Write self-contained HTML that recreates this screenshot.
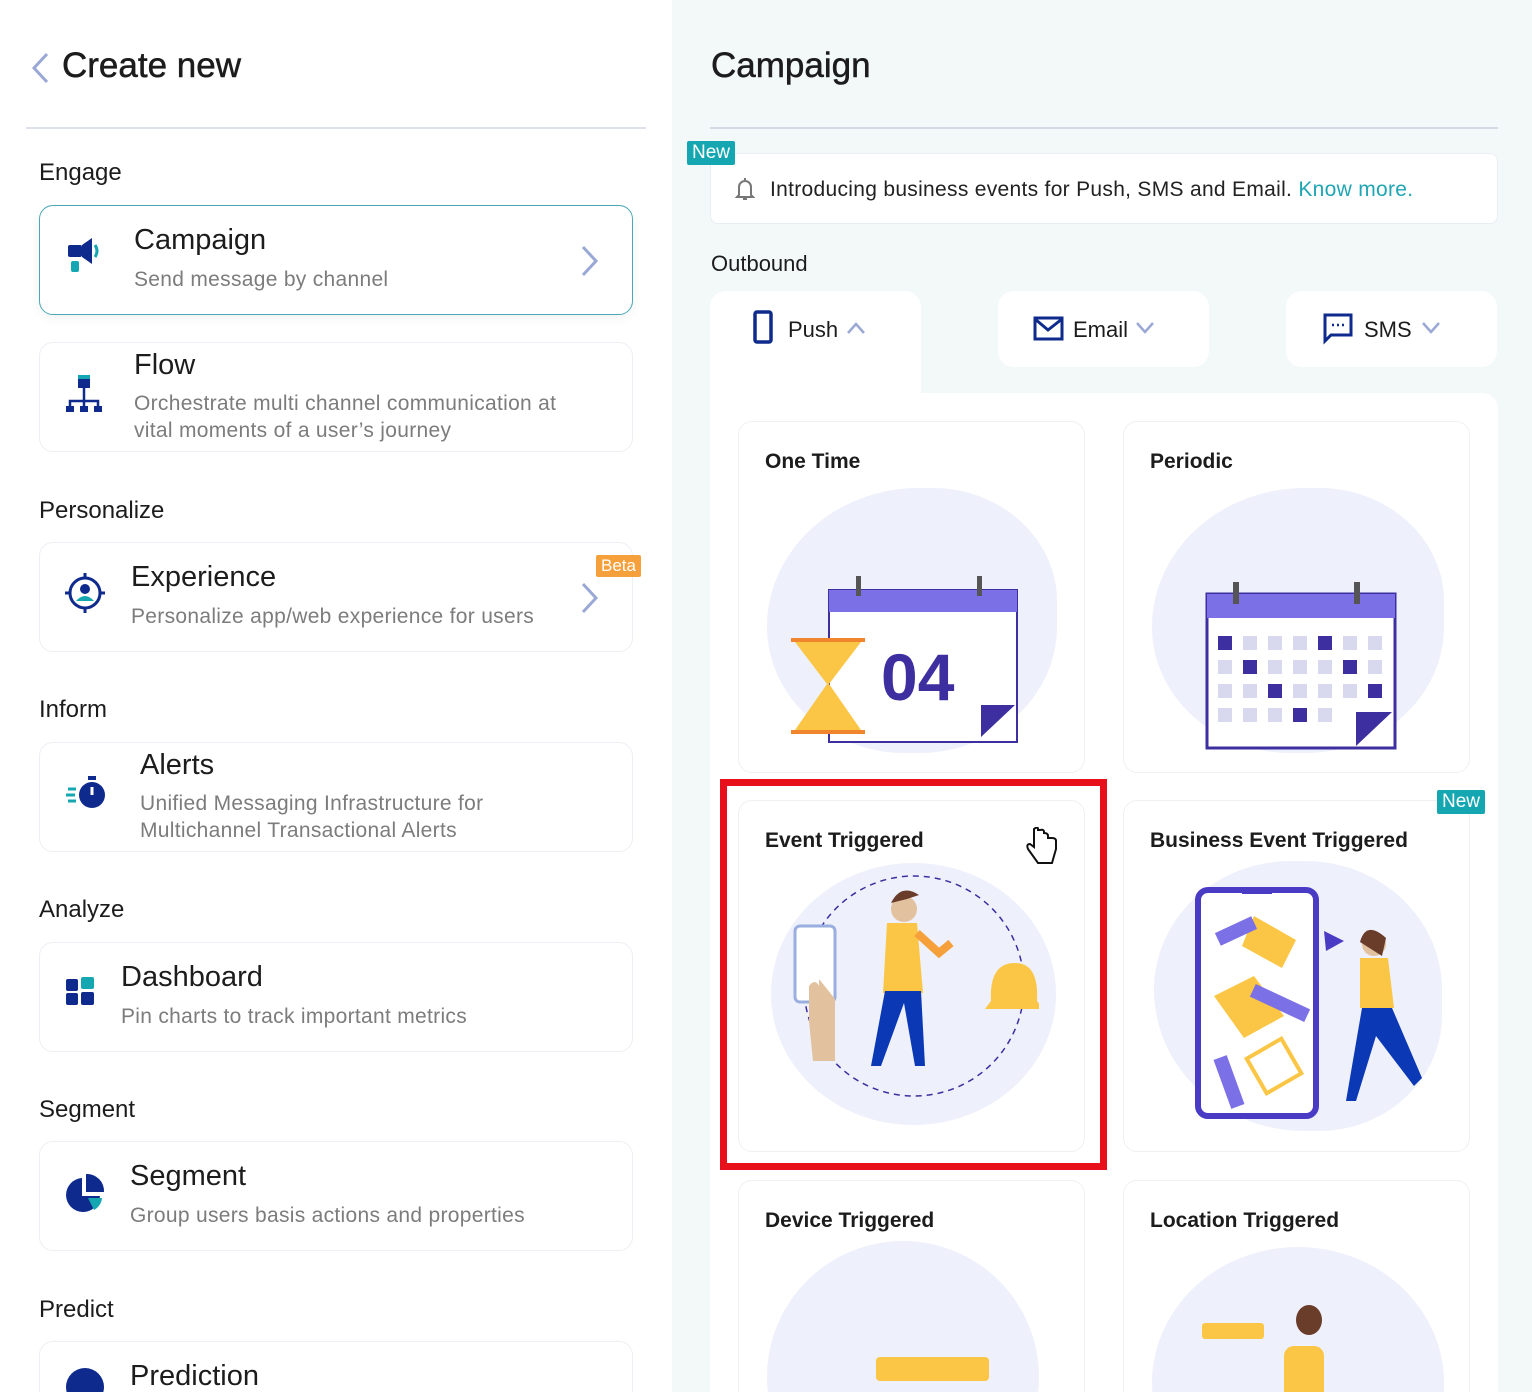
<!DOCTYPE html>
<html style="width:1532px;height:1392px;overflow:hidden"><head><meta charset="utf-8"><style>
*{margin:0;padding:0;box-sizing:border-box}
html,body{width:1532px;height:1392px;overflow:hidden}
body{font-family:"Liberation Sans",sans-serif;background:#fff;position:relative;color:#1c1c1c}
#wrap{position:absolute;left:0;top:0;width:1532px;height:1392px;overflow:hidden}
.a{position:absolute}
.left{left:0;top:0;width:672px;height:1392px;background:#fff;overflow:hidden}
.right{left:672px;top:0;width:860px;height:1392px;background:#f3f9f9;overflow:hidden}
.sec{font-size:24px;color:#1c1c1c;left:39px}
.lc{left:39px;width:594px;height:110px;border:1px solid #eceff3;border-radius:14px;background:#fff}
.lc .t{position:absolute;font-size:29px;color:#1c1c1c}
.lc .s{position:absolute;font-size:21px;color:#7c7c7c;line-height:27px;letter-spacing:0.3px}
.card{width:347px;height:352px;background:#fff;border:1px solid #eef0f3;border-radius:14px;overflow:hidden}
.card .h{position:absolute;left:26px;top:28px;font-size:21px;font-weight:bold;color:#1c1c1c}
.blob{position:absolute;background:#eef0fb;border-radius:50%}
.tab{background:#fff;border-radius:16px;height:76px;width:211px;top:291px}
.tab span{position:absolute;top:26px;font-size:22px}
.badge{background:#14a7b2;color:#fff;font-size:19px;padding:1px 5px;border-radius:2px}
</style></head><body><div id="wrap">
<div class="a left">
 <svg class="a" style="left:30px;top:52px" width="20" height="32"><path d="M17 2 L4 16 L17 30" stroke="#9aa8d6" stroke-width="3" fill="none"/></svg>
 <div class="a" style="left:62px;top:46px;font-size:35px;color:#1c1c1c;-webkit-text-stroke:0.5px #1c1c1c">Create new</div>
 <div class="a" style="left:26px;top:127px;width:620px;height:2px;background:#dde1ee"></div>
 <div class="a sec" style="top:159px">Engage</div>
 <div class="a lc" style="top:205px;border:1.5px solid #4aa8b6;box-shadow:0 4px 10px rgba(0,0,0,.05)">
  <svg class="a" style="left:26px;top:30px" width="44" height="44"><rect x="2" y="9" width="14" height="12" rx="2" fill="#0e2a8c"/><path d="M16 9 L26 2 L26 28 L16 21Z" fill="#0e2a8c"/><path d="M29 9 q4 6 0 12" stroke="#14a7b2" stroke-width="3" fill="none"/><rect x="5" y="25" width="8" height="11" rx="2" fill="#14a7b2"/></svg>
  <div class="t" style="left:94px;top:18px">Campaign</div>
  <div class="s" style="left:94px;top:60px">Send message by channel</div>
  <svg class="a" style="left:540px;top:38px" width="20" height="34"><path d="M3 3 L16 17 L3 31" stroke="#9aa8d6" stroke-width="3" fill="none"/></svg>
 </div>
 <div class="a lc" style="top:342px">
  <svg class="a" style="left:24px;top:30px" width="44" height="42"><rect x="14" y="3" width="12" height="12" fill="#0e2a8c"/><rect x="14" y="2" width="12" height="4" fill="#14a7b2"/><path d="M20 15 V28 M6 34 V28 H34 V34 M20 28 V34" stroke="#0e2a8c" stroke-width="2.5" fill="none"/><rect x="2" y="33" width="8" height="6" fill="#0e2a8c"/><rect x="16" y="33" width="8" height="6" fill="#0e2a8c"/><rect x="30" y="33" width="8" height="6" fill="#0e2a8c"/></svg>
  <div class="t" style="left:94px;top:6px">Flow</div>
  <div class="s" style="left:94px;top:47px">Orchestrate multi channel communication at<br>vital moments of a user’s journey</div>
 </div>
 <div class="a sec" style="top:497px">Personalize</div>
 <div class="a lc" style="top:542px">
  <svg class="a" style="left:24px;top:30px" width="44" height="44"><circle cx="21" cy="20" r="15" stroke="#0e2a8c" stroke-width="3" fill="none"/><circle cx="21" cy="16" r="5" fill="#0e2a8c"/><path d="M12 28 q9-10 18 0" fill="#14a7b2"/><path d="M21 0 V6 M21 34 V40 M1 20 H7 M35 20 H41" stroke="#0e2a8c" stroke-width="3"/></svg>
  <div class="t" style="left:91px;top:18px">Experience</div>
  <div class="s" style="left:91px;top:60px">Personalize app/web experience for users</div>
  <svg class="a" style="left:540px;top:38px" width="20" height="34"><path d="M3 3 L16 17 L3 31" stroke="#9aa8d6" stroke-width="3" fill="none"/></svg>
 </div>
 <div class="a" style="left:596px;top:555px;background:#f5a03a;color:#fff;font-size:17px;padding:1px 5px;border-radius:2px">Beta</div>
 <div class="a sec" style="top:696px">Inform</div>
 <div class="a lc" style="top:742px">
  <svg class="a" style="left:26px;top:30px" width="44" height="40"><circle cx="26" cy="22" r="13" fill="#0e2a8c"/><path d="M26 14 V22" stroke="#fff" stroke-width="3"/><rect x="22" y="3" width="8" height="4" fill="#0e2a8c"/><path d="M2 16 H10 M0 22 H9 M2 28 H10" stroke="#14a7b2" stroke-width="3"/></svg>
  <div class="t" style="left:100px;top:6px">Alerts</div>
  <div class="s" style="left:100px;top:47px">Unified Messaging Infrastructure for<br>Multichannel Transactional Alerts</div>
 </div>
 <div class="a sec" style="top:896px">Analyze</div>
 <div class="a lc" style="top:942px">
  <svg class="a" style="left:26px;top:34px" width="32" height="32"><rect x="0" y="2" width="12" height="12" rx="2" fill="#0e2a8c"/><rect x="15" y="0" width="13" height="12" rx="2" fill="#14a7b2"/><rect x="0" y="16" width="12" height="12" rx="2" fill="#0e2a8c"/><rect x="15" y="15" width="13" height="13" rx="2" fill="#0e2a8c"/></svg>
  <div class="t" style="left:81px;top:18px">Dashboard</div>
  <div class="s" style="left:81px;top:60px">Pin charts to track important metrics</div>
 </div>
 <div class="a sec" style="top:1096px">Segment</div>
 <div class="a lc" style="top:1141px">
  <svg class="a" style="left:24px;top:30px" width="44" height="44"><path d="M18 6 A17 17 0 1 0 36 24 L18 24Z" fill="#0e2a8c"/><path d="M22 2 A17 17 0 0 1 40 20 L22 20Z" fill="#0e2a8c"/><path d="M24 26 L38 26 A15 15 0 0 1 30 38Z" fill="#14a7b2"/></svg>
  <div class="t" style="left:90px;top:18px">Segment</div>
  <div class="s" style="left:90px;top:60px">Group users basis actions and properties</div>
 </div>
 <div class="a sec" style="top:1296px">Predict</div>
 <div class="a lc" style="top:1341px;height:80px">
  <div class="a" style="left:26px;top:26px;width:38px;height:38px;border-radius:50%;background:#0e2a8c"></div>
  <div class="t" style="left:90px;top:18px">Prediction</div>
 </div>
</div>

<div class="a right">
 <div class="a" style="left:39px;top:46px;font-size:35px;-webkit-text-stroke:0.5px #1c1c1c">Campaign</div>
 <div class="a" style="left:38px;top:127px;width:788px;height:2px;background:#d4dbe8"></div>
 <div class="a" style="left:38px;top:153px;width:788px;height:71px;background:#fff;border:1px solid #e9eef2;border-radius:8px">
  <svg class="a" style="left:24px;top:22px" width="20" height="26"><path d="M10 2 V4 M4 19 V11 a6 6 0 0 1 12 0 V19 L18 21 H2 L4 19Z M8 23 h4" stroke="#777" stroke-width="2" fill="none"/></svg>
  <div class="a" style="left:59px;top:24px;font-size:21px;color:#222;letter-spacing:0.3px">Introducing business events for Push, SMS and Email. <span style="color:#1fa5b4">Know more.</span></div>
 </div>
 <div class="a badge" style="left:15px;top:141px">New</div>
 <div class="a" style="left:39px;top:251px;font-size:22px">Outbound</div>
 <div class="a tab" style="left:38px;height:110px;border-radius:16px 16px 0 0"></div>
 <div class="a" style="left:38px;top:291px;width:211px;height:110px">
  <svg class="a" style="left:43px;top:19px" width="20" height="34"><rect x="2" y="2" width="16" height="30" rx="2" stroke="#0e2a8c" stroke-width="3.5" fill="none"/></svg>
  <span class="a" style="left:78px;top:26px;font-size:22px">Push</span>
  <svg class="a" style="left:136px;top:30px" width="20" height="14"><path d="M2 12 L10 3 L18 12" stroke="#9aa8d6" stroke-width="2.5" fill="none"/></svg>
 </div>
 <div class="a tab" style="left:326px">
  <svg class="a" style="left:35px;top:25px" width="32" height="26"><rect x="2" y="2" width="27" height="21" stroke="#0e2a8c" stroke-width="3" fill="none"/><path d="M2 3 L15 14 L29 3" stroke="#0e2a8c" stroke-width="3" fill="none"/></svg>
  <span style="left:75px">Email</span>
  <svg class="a" style="left:137px;top:30px" width="20" height="14"><path d="M2 2 L10 11 L18 2" stroke="#9aa8d6" stroke-width="2.5" fill="none"/></svg>
 </div>
 <div class="a tab" style="left:614px">
  <svg class="a" style="left:37px;top:22px" width="32" height="32"><path d="M2 2 H28 V22 H8 L2 28Z" stroke="#0e2a8c" stroke-width="3" fill="none"/><path d="M9 12h2M14 12h2M19 12h2" stroke="#0e2a8c" stroke-width="2.5"/></svg>
  <span style="left:78px">SMS</span>
  <svg class="a" style="left:135px;top:30px" width="20" height="14"><path d="M2 2 L10 11 L18 2" stroke="#9aa8d6" stroke-width="2.5" fill="none"/></svg>
 </div>
 <div class="a" style="left:38px;top:393px;width:788px;height:1010px;background:#fff;border-radius:0 16px 0 0"></div>

 <div class="a card" style="left:66px;top:421px"><div class="h">One Time</div>
  <div class="blob" style="left:28px;top:66px;width:290px;height:265px;border-radius:55% 45% 50% 50%"></div>
  <svg class="a" style="left:50px;top:150px" width="240" height="175"><rect x="40" y="18" width="188" height="152" fill="#fff" stroke="#3d2fa0" stroke-width="2"/><rect x="40" y="18" width="188" height="22" fill="#7c70e6"/><rect x="67" y="4" width="5" height="20" fill="#555"/><rect x="188" y="4" width="5" height="20" fill="#555"/><text x="92" y="128" font-family="Liberation Sans" font-weight="bold" font-size="66" fill="#3d2fa0">04</text><path d="M192 165 L192 133 L226 133Z" fill="#3d2fa0"/><path d="M6 70 H72 L40 112 L72 158 H6 L38 112Z" fill="#fbc645"/><path d="M2 68 H76 M2 160 H76" stroke="#f0852e" stroke-width="4"/></svg>
 </div>
 <div class="a card" style="left:451px;top:421px"><div class="h">Periodic</div>
  <div class="blob" style="left:28px;top:66px;width:292px;height:265px;border-radius:55% 45% 50% 50%"></div>
  <svg class="a" style="left:80px;top:158px" width="196" height="172"><rect x="3" y="14" width="188" height="154" fill="#fff" stroke="#3d2fa0" stroke-width="3"/><rect x="3" y="14" width="188" height="24" fill="#7c70e6"/><rect x="29" y="2" width="6" height="22" fill="#555"/><rect x="150" y="2" width="6" height="22" fill="#555"/>
  <g fill="#d8d8ee"><rect x="14" y="56" width="14" height="14"/><rect x="39" y="56" width="14" height="14"/><rect x="64" y="56" width="14" height="14"/><rect x="89" y="56" width="14" height="14"/><rect x="139" y="56" width="14" height="14"/><rect x="164" y="56" width="14" height="14"/><rect x="14" y="80" width="14" height="14"/><rect x="64" y="80" width="14" height="14"/><rect x="89" y="80" width="14" height="14"/><rect x="114" y="80" width="14" height="14"/><rect x="164" y="80" width="14" height="14"/><rect x="14" y="104" width="14" height="14"/><rect x="39" y="104" width="14" height="14"/><rect x="89" y="104" width="14" height="14"/><rect x="114" y="104" width="14" height="14"/><rect x="139" y="104" width="14" height="14"/><rect x="14" y="128" width="14" height="14"/><rect x="39" y="128" width="14" height="14"/><rect x="64" y="128" width="14" height="14"/><rect x="114" y="128" width="14" height="14"/></g>
  <g fill="#3d2fa0"><rect x="14" y="56" width="14" height="14"/><rect x="114" y="56" width="14" height="14"/><rect x="39" y="80" width="14" height="14"/><rect x="139" y="80" width="14" height="14"/><rect x="64" y="104" width="14" height="14"/><rect x="164" y="104" width="14" height="14"/><rect x="89" y="128" width="14" height="14"/></g><path d="M152 166 L152 132 L188 132Z" fill="#3d2fa0"/></svg>
 </div>
 <div class="a card" style="left:66px;top:800px"><div class="h">Event Triggered</div>
  <div class="blob" style="left:32px;top:62px;width:285px;height:262px"></div>
  <svg class="a" style="left:50px;top:70px" width="250" height="250"><ellipse cx="125" cy="115" rx="110" ry="110" stroke="#3d2fa0" stroke-width="1.5" stroke-dasharray="6 5" fill="none"/><rect x="6" y="55" width="40" height="76" rx="5" fill="#fff" stroke="#9aaee0" stroke-width="3"/><path d="M20 150 V115 q6-8 10 0 V108 l16 20 V190 H24Z" fill="#e2c19f"/><circle cx="115" cy="38" r="13" fill="#e2c19f"/><path d="M102 32 q10-20 28-8 L118 28Z" fill="#6a3c2a"/><path d="M98 52 H128 L134 122 H94Z" fill="#fbc645"/><path d="M128 62 L150 82 L162 72" stroke="#f5a03a" stroke-width="8" fill="none"/><path d="M96 120 L82 195 H92 L115 132 L126 195 H136 L132 120Z" fill="#0b38b5"/><path d="M202 130 q-2-38 24-38 q24 0 22 38 L254 138 H196Z" fill="#fbc645"/></svg>
  <svg class="a" style="left:285px;top:26px" width="36" height="40"><path d="M10 2 v18 l-4-3 q-4 0-2 5 l10 14 h14 l4-14 v-8 q0-3-4-3 l-4 0 v-2 q0-3-4-3 v-1 q0-3-4-2 h-2 V2 q0-3-4 0Z" fill="#fff" stroke="#111" stroke-width="2"/></svg>
 </div>
 <div class="a" style="left:48px;top:779px;width:387px;height:391px;border:7px solid #e8101a"></div>
 <div class="a card" style="left:451px;top:800px"><div class="h">Business Event Triggered</div>
  <div class="blob" style="left:30px;top:60px;width:288px;height:270px;border-radius:50% 50% 45% 55%"></div>
  <svg class="a" style="left:70px;top:85px" width="260" height="240"><rect x="4" y="4" width="118" height="226" rx="10" fill="#fff" stroke="#4a3bc4" stroke-width="6"/><path d="M48 4 h30 v4 h-30Z" fill="#4a3bc4"/><path d="M60 30 l42 24 l-14 28 l-40 -22Z" fill="#fbc645"/><rect x="22" y="38" width="40" height="14" fill="#7c70e6" transform="rotate(-25 42 45)"/><path d="M20 110 l40-20 l30 40 l-40 22Z" fill="#fbc645"/><rect x="56" y="110" width="60" height="14" fill="#7c70e6" transform="rotate(25 86 117)"/><rect x="60" y="160" width="40" height="40" fill="#fff" stroke="#fbc645" stroke-width="4" transform="rotate(-30 80 180)"/><rect x="28" y="170" width="14" height="52" fill="#7c70e6" transform="rotate(-20 35 196)"/><circle cx="180" cy="58" r="12" fill="#e2c19f"/><path d="M166 56 q6-22 26-4 l-4 18Z" fill="#6a3c2a"/><path d="M166 72 H194 L200 122 H166Z" fill="#fbc645"/><path d="M168 122 L152 215 H162 L182 150 L220 200 L228 192 L198 122Z" fill="#0b38b5"/><path d="M130 45 l20 10 l-18 10Z" fill="#4a3bc4"/></svg>
 </div>
 <div class="a badge" style="left:765px;top:790px">New</div>
 <div class="a card" style="left:66px;top:1180px"><div class="h">Device Triggered</div>
  <div class="blob" style="left:28px;top:60px;width:272px;height:272px"></div>
  <div class="a" style="left:137px;top:176px;width:113px;height:24px;background:#fbc645;border-radius:4px"></div>
 </div>
 <div class="a card" style="left:451px;top:1180px"><div class="h">Location Triggered</div>
  <div class="blob" style="left:28px;top:66px;width:292px;height:272px"></div>
  <div class="a" style="left:78px;top:142px;width:62px;height:16px;background:#fbc645;border-radius:3px"></div>
  <div class="a" style="left:172px;top:124px;width:26px;height:30px;background:#6a3c2a;border-radius:50%"></div>
  <div class="a" style="left:160px;top:165px;width:40px;height:60px;background:#fbc645;border-radius:10px"></div>
 </div>
</div>
</div></body></html>
